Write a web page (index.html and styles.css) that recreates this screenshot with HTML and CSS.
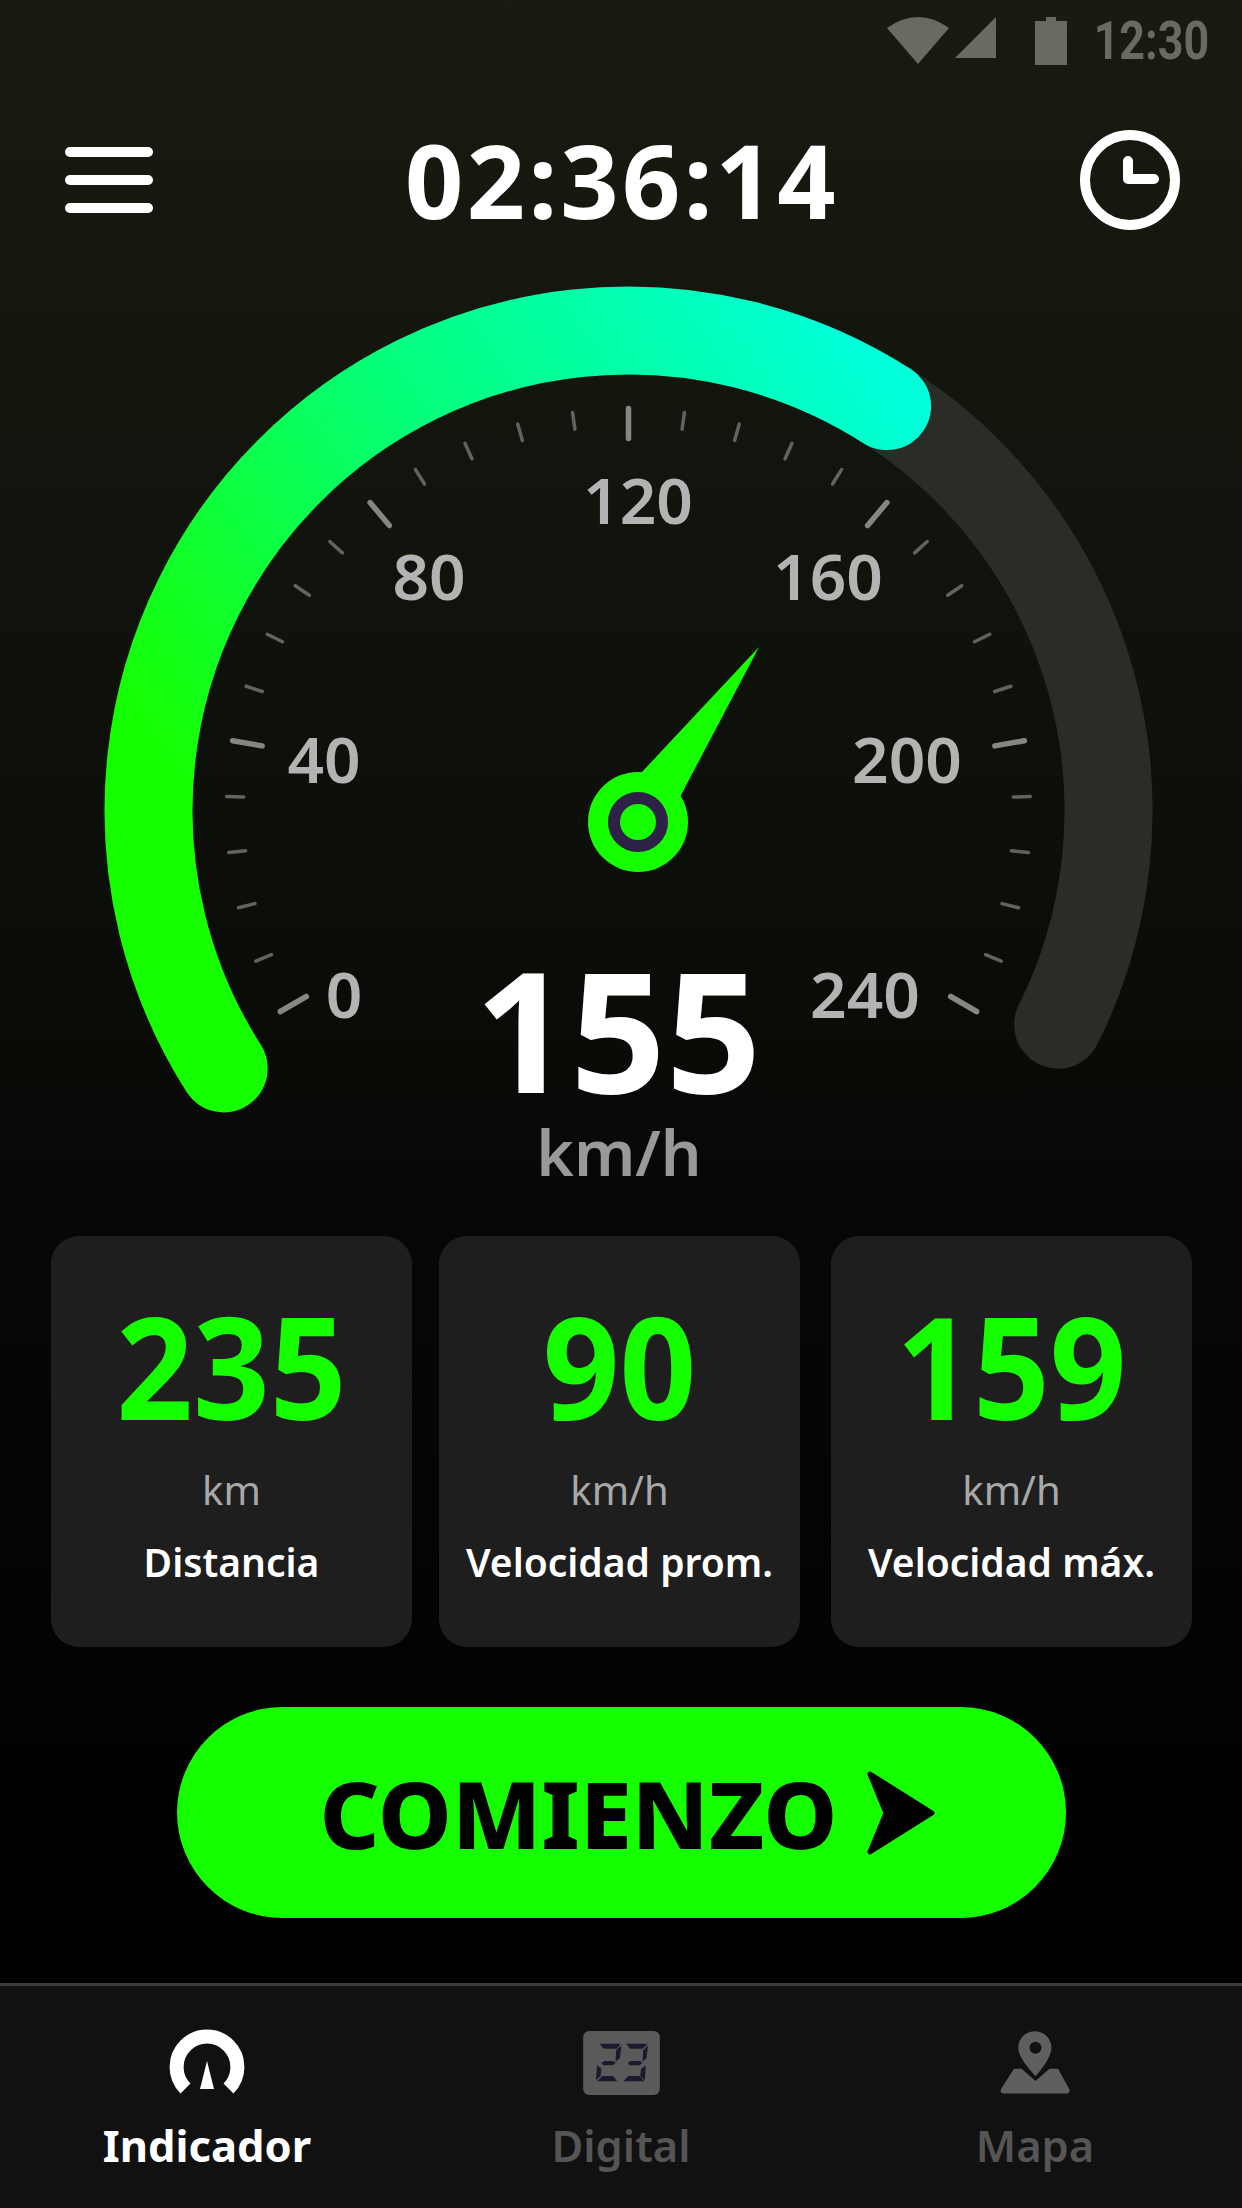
FILE: index.html
```html
<!DOCTYPE html>
<html lang="es">
<head>
    <meta charset="UTF-8">
    <title>Velocímetro</title>
    <link rel="stylesheet" href="styles.css">
</head>
<body>
    <div class="screen">
        <div class="status-bar">
            <svg class="status-signal" width="111" height="47" viewBox="0 0 111 47">
                <path d="M0 11 Q31 -11 62 11 L31 47 Z" fill="#696b63"/>
                <path d="M68 41 L109 0 V41 Z" fill="#696b63"/>
            </svg>
            <svg class="status-batt" width="32" height="48" viewBox="0 0 32 48">
                <path d="M11 0 H21 V4 H32 V48 H0 V4 H11 Z" fill="#696b63"/>
            </svg>
            <span class="status-time">12:30</span>
        </div>

        <div class="top-bar">
            <div class="menu-icon"><i></i><i></i><i></i></div>
            <div class="timer">02:36:14</div>
            <svg class="clock-icon" width="100" height="100" viewBox="0 0 100 100">
                <circle cx="50" cy="50" r="45" fill="none" stroke="#fff" stroke-width="10"/>
                <path d="M48 31 V49 H74" fill="none" stroke="#fff" stroke-width="10" stroke-linecap="round" stroke-linejoin="round"/>
            </svg>
        </div>

        <div class="gauge">
            <svg id="gauge-svg" width="1242" height="998" viewBox="0 0 1242 998">
                <defs>
                    <linearGradient id="arc-grad" gradientUnits="userSpaceOnUse" x1="240" y1="640" x2="900" y2="170">
                        <stop offset="0" stop-color="#16ff00"/>
                        <stop offset="0.5" stop-color="#05ff78"/>
                        <stop offset="1" stop-color="#00ffd8"/>
                    </linearGradient>
                </defs>
                <g id="ticks"></g>
                <path class="arc-track" d="M887.1 168.1 A480 480 0 0 1 1058.1 786.7"/>
                <path class="arc-value" d="M223.7 830.4 A480 480 0 0 1 887.1 168.1"/>
                <text class="scale" x="344" y="780">0</text>
                <text class="scale" x="324" y="545">40</text>
                <text class="scale" x="429" y="362">80</text>
                <text class="scale" x="638" y="286">120</text>
                <text class="scale" x="828" y="362">160</text>
                <text class="scale" x="907" y="545">200</text>
                <text class="scale" x="865" y="780">240</text>
                <path class="needle" d="M642 534 L759 409 L681 557 L660 590 L630 570 Z"/>
                <circle class="needle" cx="638" cy="584" r="50"/>
                <circle class="hub-ring" cx="638" cy="584" r="24"/>
            </svg>
            <div class="speed">155</div>
            <div class="speed-unit">km/h</div>
        </div>

        <div class="stats">
            <div class="stat-card">
                <div class="stat-value">235</div>
                <div class="stat-unit">km</div>
                <div class="stat-label">Distancia</div>
            </div>
            <div class="stat-card">
                <div class="stat-value">90</div>
                <div class="stat-unit">km/h</div>
                <div class="stat-label">Velocidad prom.</div>
            </div>
            <div class="stat-card">
                <div class="stat-value">159</div>
                <div class="stat-unit">km/h</div>
                <div class="stat-label">Velocidad máx.</div>
            </div>
        </div>

        <div class="start-wrap">
            <button class="start-btn">
                COMIENZO
                <svg width="68" height="84" viewBox="0 0 68 84">
                    <path d="M3 3 L65 42 L3 81 L19 42 Z" fill="#000" stroke="#000" stroke-width="5" stroke-linejoin="round"/>
                </svg>
            </button>
        </div>

        <nav class="tabs">
            <div class="tab active">
                <svg width="76" height="66" viewBox="0 0 76 66">
                    <path d="M16.5 59.5 A30.4 30.4 0 1 1 59.5 59.5" fill="none" stroke="#fff" stroke-width="14"/>
                    <path d="M38 32 L45 60 H31 Z" fill="#fff"/>
                </svg>
                <span>Indicador</span>
            </div>
            <div class="tab">
                <svg width="77" height="66" viewBox="43 41 230 198">
                    <rect x="43" y="47" width="230" height="192" rx="18" fill="#5a5a5a"/>
                    <g fill="#1a1a2e">
                        <path d="M92 85 H155 L144 100 H105 Z"/>
                        <path d="M158 90 L153 128 L140 140 L142 105 Z"/>
                        <path d="M106 137 H134 L140 144 L132 150 H104 L98 144 Z"/>
                        <path d="M85 150 L98 160 L95 182 L81 195 Z"/>
                        <path d="M100 182 H133 L145 198 H85 Z"/>
                        <path d="M172 85 H236 L222 100 H184 Z"/>
                        <path d="M238 90 L233 128 L221 140 L223 105 Z"/>
                        <path d="M184 137 H214 L220 144 L212 150 H182 L177 144 Z"/>
                        <path d="M231 150 L228 195 L214 182 L217 160 Z"/>
                        <path d="M178 182 H213 L226 198 H164 Z"/>
                    </g>
                </svg>
                <span>Digital</span>
            </div>
            <div class="tab">
                <svg width="73" height="66" viewBox="60 41 220 198">
                    <path fill-rule="evenodd" fill="#5f5f5f" d="M168 47 C140 47 118 70 118 97 C118 125 150 160 170 183 C190 160 218 125 218 97 C218 70 196 47 168 47 Z M170 79 A18 18 0 1 1 170 115 A18 18 0 1 1 170 79 Z"/>
                    <path fill="#5f5f5f" d="M105 160 H128 L170 197 L212 160 H238 L272 222 Q275 235 262 235 H75 Q62 235 66 222 Z"/>
                </svg>
                <span>Mapa</span>
            </div>
        </nav>
    </div>

    <script>
        // marcas de la escala: 30 divisiones de 8 grados, mayor cada 5
        const cx = 628.5, cy = 572.5, svgNS = 'http://www.w3.org/2000/svg';
        const ticks = document.getElementById('ticks');
        for (let i = 0; i <= 30; i++) {
            const major = i % 5 === 0;
            const ang = (-120 + i * 8) * Math.PI / 180;
            const r1 = 402, r2 = major ? 372 : 385;
            const line = document.createElementNS(svgNS, 'line');
            line.setAttribute('x1', cx + r1 * Math.sin(ang));
            line.setAttribute('y1', cy - r1 * Math.cos(ang));
            line.setAttribute('x2', cx + r2 * Math.sin(ang));
            line.setAttribute('y2', cy - r2 * Math.cos(ang));
            line.setAttribute('class', major ? 'tick major' : 'tick');
            ticks.appendChild(line);
        }
    </script>
</body>
</html>
```

FILE: styles.css
```css
* { box-sizing: border-box; }
html, body { margin: 0; padding: 0; }
body { width: 1242px; height: 2208px; overflow: hidden; font-family: "Noto Sans", sans-serif; background: #000; }
.screen { width: 1242px; height: 2208px; display: flex; flex-direction: column; background: linear-gradient(180deg, #191b11 0%, #0f120b 30%, #070806 55%, #000 85%); }

.status-bar { height: 70px; padding: 17px 33px 0 0; display: flex; align-items: flex-start; justify-content: flex-end; }
.status-batt { margin-left: 37px; }
.status-time { font-family: Roboto, sans-serif; font-weight: 700; font-size: 54px; line-height: 48px; color: #696b63; transform: scaleX(.83); transform-origin: right; margin-left: 3px; }

.top-bar { height: 116px; margin-top: 52px; padding: 0 62px 0 65px; display: flex; align-items: center; justify-content: space-between; }
.menu-icon { width: 88px; display: flex; flex-direction: column; gap: 18px; }
.menu-icon i { display: block; height: 10px; background: #fff; border-radius: 5px; }
.timer { font-weight: 700; font-size: 102px; line-height: 116px; letter-spacing: 3.3px; color: #fff; margin-left: 11px; }

.gauge { position: relative; height: 998px; }
#gauge-svg { display: block; }
.arc-track { fill: none; stroke: #2a2c26; stroke-width: 88; stroke-linecap: round; }
.arc-value { fill: none; stroke: url(#arc-grad); stroke-width: 88; stroke-linecap: round; }
.tick { stroke: #62635f; stroke-width: 3.5; stroke-linecap: round; }
.tick.major { stroke: #868684; stroke-width: 5.5; }
.scale { font-weight: 600; font-size: 64px; fill: #b3b3b3; text-anchor: middle; }
.needle { fill: #16ff00; }
.hub-ring { fill: #16ff00; stroke: #2e2148; stroke-width: 12; }

.speed { position: absolute; left: 0; width: 1236px; top: 705px; text-align: center; font-weight: 700; font-size: 167px; line-height: 170px; color: #fff; }
.speed-unit { position: absolute; left: 0; width: 1238px; top: 879px; text-align: center; font-weight: 600; font-size: 64px; line-height: 70px; color: #999; }

.stats { display: flex; padding-left: 51px; }
.stat-card { width: 361px; height: 411px; border-radius: 28px; background: #1e1e1e; text-align: center; padding-top: 59px; }
.stat-card:nth-child(2) { margin-left: 27px; }
.stat-card:nth-child(3) { margin-left: 31px; }
.stat-value { font-weight: 700; font-size: 142px; line-height: 140px; color: #16ff00; transform: scaleX(.945); }
.stat-unit { font-size: 40px; line-height: 50px; color: #a8a8a8; margin-top: 30px; }
.stat-label { font-weight: 600; font-size: 39px; line-height: 50px; color: #fff; margin-top: 22px; }

.start-wrap { display: flex; justify-content: center; margin-top: 60px; }
.start-btn { width: 889px; height: 211px; padding: 0 0 0 12px; border: none; border-radius: 106px; background: #16ff00; color: #000; font-family: "Noto Sans", sans-serif; font-weight: 800; font-size: 93.5px; display: flex; align-items: center; justify-content: center; gap: 29px; }

.tabs { margin-top: 65px; flex: 1; border-top: 3px solid #3a3a3a; background: #111; display: flex; }
.tab { width: 414px; display: flex; flex-direction: column; align-items: center; gap: 22px; padding-top: 43px; color: #555; font-weight: 600; font-size: 43.5px; line-height: 56px; }
.tab.active { color: #fff; font-weight: 700; }
```
